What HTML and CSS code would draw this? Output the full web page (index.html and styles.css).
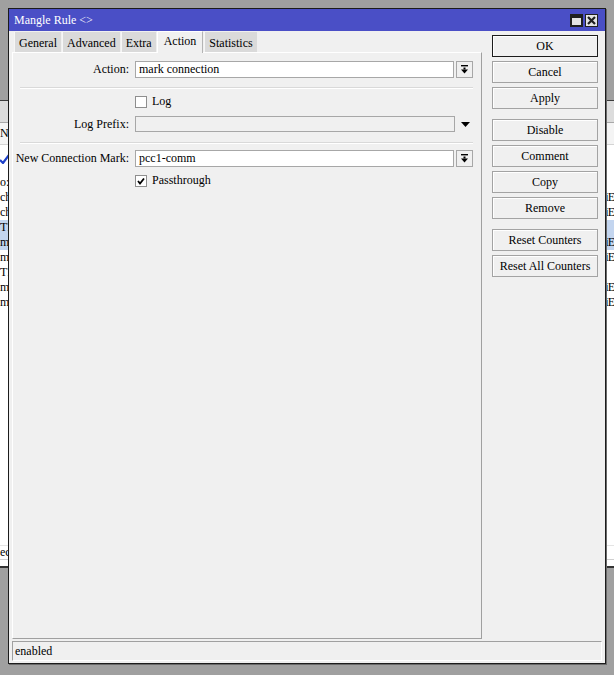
FILE: index.html
```html
<!DOCTYPE html>
<html lang="en">
<head>
  <meta charset="UTF-8">
  <title>Mangle Rule</title>
  <link rel="stylesheet" href="styles.css">
</head>
<body>
  <div class="app">
    <div class="app-top"></div>
    <div class="app-toolbar"></div>
    <div class="app-table">
      <div class="app-row head"><span class="cl">N</span><span class="cr"></span></div>
      <div class="app-row tall">
        <span class="cl">
          <svg width="9" height="10" viewBox="0 0 9 10"><path d="M0 6 L3 9 L9 1" fill="none" stroke="#1c3fc8" stroke-width="2.2"/></svg>
        </span>
        <span class="cr"></span>
      </div>
      <div class="app-row"><span class="cl">o:</span><span class="cr"></span></div>
      <div class="app-row"><span class="cl">ch</span><span class="cr">iE</span></div>
      <div class="app-row"><span class="cl">ch</span><span class="cr">iE</span></div>
      <div class="app-row sel"><span class="cl">TI</span><span class="cr"></span></div>
      <div class="app-row sel"><span class="cl">ma</span><span class="cr">iE</span></div>
      <div class="app-row"><span class="cl">ma</span><span class="cr">iE</span></div>
      <div class="app-row"><span class="cl">TI</span><span class="cr"></span></div>
      <div class="app-row"><span class="cl">ma</span><span class="cr">iE</span></div>
      <div class="app-row"><span class="cl">ma</span><span class="cr">iE</span></div>
      <div class="app-row last"><span class="cl">ec</span><span class="cr"></span></div>
    </div>
  </div>

  <div class="window">
    <div class="titlebar">
      <span class="title">Mangle Rule &lt;&gt;</span>
      <span class="tb-btn">
        <svg width="11" height="11" viewBox="0 0 11 11"><rect x="0.5" y="0.5" width="10" height="10" fill="#e4e4e4" stroke="#202020"/><rect x="1" y="1" width="9" height="2" fill="#202020"/></svg>
      </span>
      <span class="tb-btn">
        <svg width="11" height="11" viewBox="0 0 11 11"><path d="M2 2 L9 9 M9 2 L2 9" stroke="#202020" stroke-width="2.2"/></svg>
      </span>
    </div>

    <div class="window-body">
      <div class="main">
        <div class="editor">
          <div class="tabs">
            <span class="tab">General</span>
            <span class="tab">Advanced</span>
            <span class="tab">Extra</span>
            <span class="tab active">Action</span>
            <span class="tab">Statistics</span>
          </div>
          <div class="panel">
            <div class="row">
              <label class="lbl">Action:</label>
              <div class="input">mark connection</div>
              <span class="drop">
                <svg width="9" height="9" viewBox="0 0 9 9"><rect x="1" y="0" width="7" height="1.4" fill="#000"/><rect x="3.5" y="2.5" width="2" height="2" fill="#000"/><path d="M1 4.5 H8 L4.5 8.5 Z" fill="#000"/></svg>
              </span>
            </div>
            <div class="sep"></div>
            <div class="row check-row">
              <span class="box"></span>
              <span>Log</span>
            </div>
            <div class="row short">
              <label class="lbl">Log Prefix:</label>
              <div class="input disabled"></div>
              <span class="arrow">
                <svg width="9" height="5" viewBox="0 0 9 5"><path d="M0 0 H9 L4.5 5 Z" fill="#000"/></svg>
              </span>
            </div>
            <div class="sep second"></div>
            <div class="row">
              <label class="lbl">New Connection Mark:</label>
              <div class="input">pcc1-comm</div>
              <span class="drop">
                <svg width="9" height="9" viewBox="0 0 9 9"><rect x="1" y="0" width="7" height="1.4" fill="#000"/><rect x="3.5" y="2.5" width="2" height="2" fill="#000"/><path d="M1 4.5 H8 L4.5 8.5 Z" fill="#000"/></svg>
              </span>
            </div>
            <div class="row check-row last">
              <span class="box">
                <svg width="10" height="10" viewBox="0 0 10 10"><path d="M2 5 L4 7.5 L8 2.5" fill="none" stroke="#000" stroke-width="1.8"/></svg>
              </span>
              <span>Passthrough</span>
            </div>
          </div>
        </div>

        <div class="buttons">
          <button class="btn default">OK</button>
          <button class="btn">Cancel</button>
          <button class="btn">Apply</button>
          <button class="btn group">Disable</button>
          <button class="btn">Comment</button>
          <button class="btn">Copy</button>
          <button class="btn">Remove</button>
          <button class="btn group">Reset Counters</button>
          <button class="btn">Reset All Counters</button>
        </div>
      </div>
      <div class="status">enabled</div>
    </div>
  </div>
</body>
</html>
```

FILE: styles.css
```css
* {
  margin: 0;
  padding: 0;
  box-sizing: border-box;
}

body {
  font-family: 'Liberation Serif', 'Times New Roman', serif;
  font-size: 12px;
  color: #000;
  background-color: #a0a0a0;
  width: 614px;
  height: 675px;
  overflow: hidden;
  position: relative;
}

/* the app behind the dialog */

.app-top {
  height: 100px;
  background-color: #a0a0a0;
}

.app-toolbar {
  height: 23px;
  background-color: #dcdcdc;
  border-top: 1px solid #3c3c3c;
  border-bottom: 1px solid #a8a8a8;
}

.app-table {
  height: 445px;
  background-color: #fff;
  border-bottom: 2px solid #333;
  display: flex;
  flex-direction: column;
}

.app-row {
  height: 15px;
  display: flex;
  justify-content: space-between;
  align-items: center;
  line-height: 15px;
}

.app-row.head {
  height: 22px;
  background-color: #f4f4f4;
  border-bottom: 1px solid #d4d4d4;
}

.app-row.tall {
  height: 30px;
}

.app-row.sel {
  background-color: #c3d5ef;
}

.app-row.last {
  margin-top: auto;
  margin-bottom: 6px;
  border-top: 1px solid #e4e4e4;
  border-bottom: 1px solid #cfcfcf;
}

.cl {
  white-space: nowrap;
}

.cr {
  white-space: nowrap;
  letter-spacing: -1px;
}

/* dialog window */

.window {
  position: absolute;
  left: 8px;
  top: 8px;
  width: 598px;
  height: 656px;
  border: 1px solid #1c1c1c;
  background-color: #f0f0f0;
  box-shadow: 1px 1px 0 #6a6a6a;
  display: flex;
  flex-direction: column;
}

.titlebar {
  height: 22px;
  background-color: #4a4fc6;
  display: flex;
  align-items: center;
  padding: 1px 7px 0 5px;
  gap: 2px;
}

.title {
  color: #fff;
  flex: 1;
}

.tb-btn {
  width: 13px;
  height: 13px;
  background-color: #e4e4e4;
  border: 1px solid #202020;
  display: flex;
  align-items: center;
  justify-content: center;
}

.tb-btn svg {
  display: block;
}

.window-body {
  flex: 1;
  display: flex;
  flex-direction: column;
  padding: 0 3px 2px 3px;
}

.main {
  display: flex;
  height: 608px;
}

.editor {
  width: 470px;
  display: flex;
  flex-direction: column;
}

.tabs {
  height: 21px;
  display: flex;
  align-items: flex-end;
  padding-left: 2px;
}

.tab {
  height: 20px;
  line-height: 20px;
  padding: 1px 4px 0;
  background-color: #dadada;
  border-left: 1px solid #f6f6f6;
  margin-right: 1px;
}

.tab.active {
  height: 22px;
  line-height: 19px;
  padding: 0 6px;
  background-color: #f0f0f0;
  border-left: 1px solid #fff;
  border-top: 1px solid #fff;
  border-right: 1px solid #b4b4b4;
  margin-bottom: -1px;
  position: relative;
}

.panel {
  flex: 1;
  border: 1px solid #a0a0a0;
  border-top-color: #fff;
  border-left-color: #fff;
  padding-top: 8px;
}

.row {
  display: flex;
  align-items: center;
  height: 17px;
}

.row.short {
  height: 16px;
  margin-top: 8px;
}

.lbl {
  width: 116px;
  text-align: right;
  margin-right: 6px;
}

.input {
  width: 319px;
  height: 17px;
  line-height: 15px;
  padding-left: 3px;
  background-color: #fff;
  border: 1px solid #a7a7a7;
}

.short .input {
  width: 320px;
  height: 16px;
}

.input.disabled {
  background-color: #f0f0f0;
}

.drop {
  width: 17px;
  height: 17px;
  margin-left: 2px;
  background-color: #f0f0f0;
  border: 1px solid #a7a7a7;
  display: flex;
  align-items: center;
  justify-content: center;
}

.drop svg,
.arrow svg,
.box svg {
  display: block;
}

.arrow {
  margin-left: 6px;
}

.sep {
  margin: 9px 0 0 7px;
  width: 453px;
  height: 2px;
  border-top: 1px solid #d9d9d9;
  border-bottom: 1px solid #fff;
}

.sep.second {
  margin-top: 10px;
}

.check-row {
  height: 13px;
  margin-top: 6px;
  padding-left: 122px;
  gap: 5px;
}

.check-row.last {
  margin-top: 7px;
}

.box {
  width: 12px;
  height: 12px;
  background-color: #fff;
  border: 1px solid #8e8e8e;
  display: flex;
  align-items: center;
  justify-content: center;
}

.sep + .row:not(.check-row) {
  margin-top: 6px;
}

.buttons {
  width: 106px;
  margin-left: 10px;
  padding-top: 4px;
  display: flex;
  flex-direction: column;
  gap: 4px;
}

.btn {
  font-family: inherit;
  font-size: 12px;
  height: 22px;
  background-color: #f0f0f0;
  border: 1px solid #a3a3a3;
  box-shadow: inset 1px 1px 0 #fff;
  color: #000;
}

.btn.default {
  border-color: #1c1c1c;
}

.btn.group {
  margin-top: 6px;
}

.status {
  margin-top: 2px;
  height: 20px;
  line-height: 18px;
  padding-left: 2px;
  border: 1px solid #a0a0a0;
  border-right-color: #fff;
  border-bottom-color: #fff;
}
```
